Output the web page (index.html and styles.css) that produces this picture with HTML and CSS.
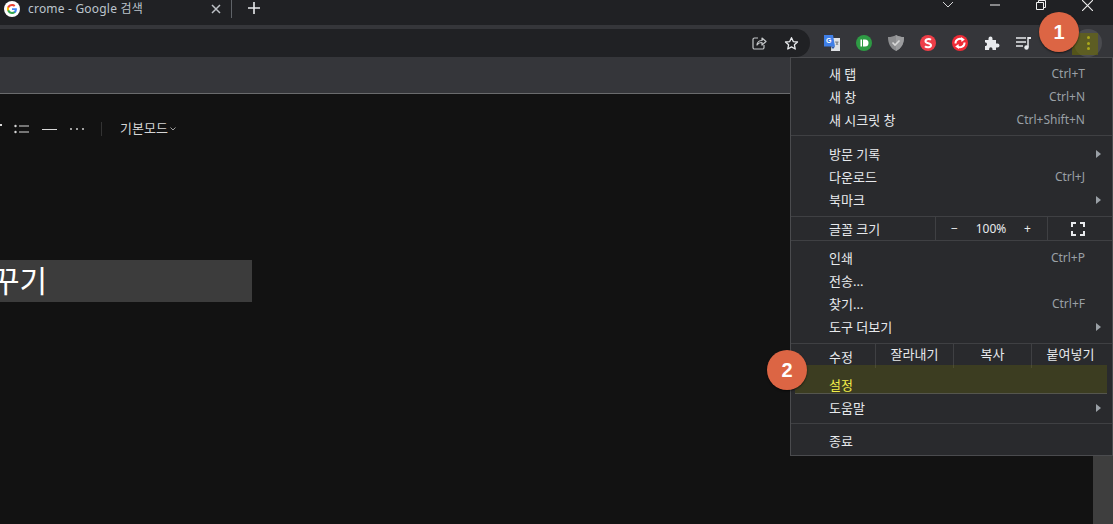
FILE: index.html
```html
<!DOCTYPE html>
<html lang="ko">
<head>
<meta charset="utf-8">
<title>crome - Google 검색</title>
<link rel="stylesheet" href="styles.css">
</head>
<body>
<div class="window">
  <header class="tabstrip">
    <div class="tab">
      <svg class="favicon" viewBox="0 0 16 16" width="16" height="16"><circle cx="8" cy="8" r="8" fill="#fff"/><path d="M12.900 8.200c0-.4 0-.7-.1-1H8v1.900h2.800c-.1.600-.5 1.200-1 1.500v1.300h1.600c1-.9 1.500-2.200 1.500-3.700z" fill="#4285f4"/><path d="M8 13c1.400 0 2.500-.5 3.400-1.300l-1.600-1.300c-.5.300-1 .5-1.800.5-1.300 0-2.500-.9-2.900-2.100H3.400v1.300C4.200 11.900 6 13 8 13z" fill="#34a853"/><path d="M5.100 8.800c-.2-.6-.2-1.100 0-1.700V5.800H3.400c-.6 1.300-.6 3 0 4.300z" fill="#fbbc05"/><path d="M8 5c.8 0 1.500.3 2 .8l1.400-1.400C10.500 3.500 9.400 3 8 3 6 3 4.200 4.100 3.400 5.800l1.700 1.300C5.500 5.900 6.700 5 8 5z" fill="#ea4335"/></svg>
      <span class="tab-title">crome - Google 검색</span>
      <svg class="tab-close" viewBox="0 0 10 10" width="10" height="10"><path d="M1 1l8 8M9 1l-8 8" stroke="#bdc1c6" stroke-width="1.500" fill="none"/></svg>
    </div>
    <svg class="new-tab" viewBox="0 0 12 12" width="12" height="12"><path d="M6 0v12M0 6h12" stroke="#e8eaed" stroke-width="1.600" fill="none"/></svg>
    <div class="window-controls">
      <svg viewBox="0 0 12 8" width="12" height="8"><path d="M1 1l5 5 5-5" stroke="#d5d6d8" stroke-width="1" fill="none"/></svg>
      <svg viewBox="0 0 10 2" width="10" height="2"><path d="M0 1h10" stroke="#f0f0f0" stroke-width="1" fill="none"/></svg>
      <svg viewBox="0 0 10 10" width="10" height="10"><path d="M.5 2.500h7v7h-7zM2.500 2.500v-2h7v7h-2" stroke="#f0f0f0" stroke-width="1" fill="none"/></svg>
      <svg viewBox="0 0 10 10" width="11" height="11"><path d="M0 0l10 10M10 0L0 10" stroke="#f0f0f0" stroke-width="1" fill="none"/></svg>
    </div>
  </header>
  <div class="toolbar">
    <div class="omnibox">
      <svg viewBox="0 0 16 16" width="16" height="16"><path d="M7 3H3.500A1.500 1.500 0 0 0 2 4.500v8A1.500 1.500 0 0 0 3.500 14h8a1.500 1.500 0 0 0 1.500-1.500V10" stroke="#c4c7c9" stroke-width="1.200" fill="none"/><path d="M6 10c0-3 2.500-4.500 5-4.500V3l4 3.500L11 10V7.500c-2 0-4 .7-5 2.500z" stroke="#c4c7c9" stroke-width="1.200" fill="none" stroke-linejoin="round"/></svg>
      <svg viewBox="0 0 16 16" width="15" height="15"><path d="M8 1.800l1.900 4.100 4.500.5-3.300 3 .9 4.500L8 11.600l-4 2.300.9-4.500-3.300-3 4.500-.5z" stroke="#e8eaed" stroke-width="1.400" fill="none" stroke-linejoin="round"/></svg>
    </div>
    <div class="extensions">
      <svg class="ext" viewBox="0 0 16 16" width="16" height="16"><path d="M8 3h8v13H7z" fill="#dfe1e5"/><path d="M0 0h9l2 11.500H0z" fill="#3f7fe8"/><path d="M7 11.500h4L9 14z" fill="#2a56a8"/><text class="ext-g" x="2" y="8">G</text><path d="M11 7h3.500M12 10l2-3M12 7l2 3" stroke="#7b7f86" stroke-width=".9" fill="none"/></svg>
      <svg class="ext" viewBox="0 0 16 16" width="16" height="16"><circle cx="8" cy="8" r="8" fill="#2e9a44"/><path d="M4.500 4.500h1.500v7H4.500z" fill="#fff"/><path d="M7 4.500h2a3.500 3.500 0 0 1 0 7H7z" fill="#fff"/></svg>
      <svg class="ext" viewBox="0 0 16 16" width="16" height="16"><path d="M8 0c2.500 1.500 5 2 8 2 0 6-2 11-8 14C2 13 0 8 0 2c3 0 5.500-.5 8-2z" fill="#8c8d8f"/><path d="M8 0c2.500 1.500 5 2 8 2 0 6-2 11-8 14z" fill="#9b9c9e"/><path d="M4.500 7.500l2.500 2.500 4.500-4.500" stroke="#d8d8d8" stroke-width="1.600" fill="none"/></svg>
      <svg class="ext" viewBox="0 0 16 16" width="16" height="16"><circle cx="8" cy="8" r="8" fill="#ee3e48"/><path d="M11 4.800C9.500 3.700 5.500 3.800 5.500 6.200S11 7.800 11 10.200 6.500 12.700 5 11.200" stroke="#fff" stroke-width="2" fill="none"/></svg>
      <svg class="ext" viewBox="0 0 16 16" width="16" height="16"><circle cx="8" cy="8" r="8" fill="#ef2b36"/><path d="M3.500 8.500A4.500 4.500 0 0 1 10.500 4.500M12.500 7.500A4.500 4.500 0 0 1 5.500 11.500" stroke="#fff" stroke-width="2" fill="none"/><path d="M9 2l3.800 2.500L9.500 7zM7 14l-3.800-2.500L6.500 9z" fill="#fff"/></svg>
      <svg class="ext" viewBox="0 0 16 16" width="16" height="16"><path d="M1 5h3.500V3.500a2 2 0 0 1 4 0V5H12v3.500h1.500a2 2 0 0 1 0 4H12V15H8.500v-1a1.700 1.700 0 0 0-3.400 0v1H1v-4h1a2 2 0 0 0 0-3.500H1z" fill="#e8eaed"/></svg>
      <svg class="ext" viewBox="0 0 16 16" width="16" height="16"><path d="M0 3h10M0 7h10M0 11h7" stroke="#e8eaed" stroke-width="1.300" fill="none"/><path d="M12 2v10" stroke="#e8eaed" stroke-width="1.500"/><path d="M12 2h3v2h-3" fill="#e8eaed"/><circle cx="10.500" cy="12.500" r="2.200" fill="#e8eaed"/></svg>
      <span class="avatar"></span>
      <button class="menu-button" aria-label="menu"><i></i><i></i><i></i></button>
    </div>
  </div>
  <div class="bookmarks"></div>
  <div class="page">
    <main class="doc">
      <div class="doc-toolbar">
        <span class="tick"></span>
        <svg class="doc-list" viewBox="0 0 15 10" width="15" height="10"><path d="M5 2h10M5 8h10" stroke="#d8d8d8" stroke-width="1"/><circle cx="1.500" cy="2" r="1.200" fill="#d8d8d8"/><circle cx="1.500" cy="8" r="1.200" fill="#d8d8d8"/></svg>
        <span class="doc-line"></span>
        <span class="doc-dots"><i></i><i></i><i></i></span>
        <span class="doc-divider"></span>
        <span class="doc-mode">기본모드</span>
        <svg class="doc-caret" viewBox="0 0 6 4" width="6" height="4"><path d="M.5.500L3 3 5.500.500" stroke="#b0b0b0" stroke-width=".9" fill="none"/></svg>
      </div>
      <div class="doc-heading"><span>꾸기</span></div>
    </main>
    <div class="scrollbar"></div>
  </div>
</div>

<nav class="menu">
  <section class="sec sec-a">
    <div class="row"><span>새 탭</span><kbd>Ctrl+T</kbd></div>
    <div class="row"><span>새 창</span><kbd>Ctrl+N</kbd></div>
    <div class="row"><span>새 시크릿 창</span><kbd>Ctrl+Shift+N</kbd></div>
  </section>
  <section class="sec sec-b">
    <div class="row"><span>방문 기록</span><b class="arrow"></b></div>
    <div class="row"><span>다운로드</span><kbd>Ctrl+J</kbd></div>
    <div class="row"><span>북마크</span><b class="arrow"></b></div>
  </section>
  <section class="sec-zoom">
    <span class="zoom-label">글꼴 크기</span>
    <div class="zoom-ctrl"><span>−</span><span>100%</span><span>+</span></div>
    <div class="zoom-full"><svg viewBox="0 0 14 14" width="14" height="14"><path d="M1 5V1h4M9 1h4v4M13 9v4H9M5 13H1V9" stroke="#e8eaed" stroke-width="2" fill="none"/></svg></div>
  </section>
  <section class="sec sec-c">
    <div class="row"><span>인쇄</span><kbd>Ctrl+P</kbd></div>
    <div class="row"><span>전송...</span></div>
    <div class="row"><span>찾기...</span><kbd>Ctrl+F</kbd></div>
    <div class="row"><span>도구 더보기</span><b class="arrow"></b></div>
  </section>
  <section class="sec-edit">
    <span class="edit-label">수정</span>
    <span class="edit-cell">잘라내기</span>
    <span class="edit-cell">복사</span>
    <span class="edit-cell">붙여넣기</span>
  </section>
  <section class="sec sec-d">
    <div class="row row-hot"><span>설정</span></div>
    <div class="row"><span>도움말</span><b class="arrow"></b></div>
  </section>
  <section class="sec sec-e">
    <div class="row"><span>종료</span></div>
  </section>
  <div class="highlight"></div>
</nav>

<div class="menu-button-mark"></div>
<div class="badge badge-1">1</div>
<div class="badge badge-2">2</div>
</body>
</html>
```
FILE: styles.css
```css
* { box-sizing: border-box; }
html, body { margin: 0; height: 100%; overflow: hidden; background: #121212; }
body { font: 12px/1.2 "Noto Sans", "Noto Sans CJK KR", sans-serif; color: #e8eaed; }

.window { display: flex; flex-direction: column; height: 524px; }

.tabstrip { height: 25px; background: #202124; display: flex; align-items: flex-start; }
.tab { width: 232px; height: 18px; padding-left: 4px; display: flex; align-items: center; border-right: 1px solid #5f6368; }
.favicon { flex: none; }
.tab-title { margin-left: 8px; flex: 1; font-size: 12px; letter-spacing: .2px; color: #bcc4cc; white-space: nowrap; }
.tab-close { margin-right: 10px; }
.new-tab { margin: 2px 0 0 16px; }
.window-controls { margin-left: auto; padding-right: 20px; display: flex; gap: 36px; align-items: center; height: 10px; }

.toolbar { height: 32px; padding-top: 4px; background: #35363a; display: flex; }
.omnibox { width: 810px; background: #202124; border-radius: 0 14px 14px 0; display: flex; align-items: center; justify-content: flex-end; gap: 17px; padding-right: 11px; }
.extensions { flex: 1; display: flex; align-items: center; padding-left: 14px; gap: 16px; }
.ext { flex: none; }
.ext-g { font: 700 7px "Liberation Sans", sans-serif; fill: #fff; }
.avatar { width: 16px; height: 16px; border-radius: 50%; background: #55504c; flex: none; }
.menu-button { width: 28px; height: 28px; margin-left: -6px; padding: 0; border: 0; border-radius: 50%; background: #4a4b4f; display: flex; flex-direction: column; align-items: center; justify-content: center; gap: 2.500px; }
.menu-button i { width: 3px; height: 3px; border-radius: 50%; background: #f5ee3c; }

.bookmarks { height: 37px; background: #35363a; border-bottom: 1px solid #6a6b6d; }

.page { flex: 1; display: flex; min-height: 0; }
.doc { flex: 1; background: #121212; min-width: 0; }
.scrollbar { width: 20px; background: #3e3e3e; }

.doc-toolbar { height: 14px; margin-top: 28px; display: flex; align-items: center; }
.tick { width: 2px; height: 2px; margin-top: -8px; background: #d8d8d8; }
.doc-list { margin-left: 12px; }
.doc-line { width: 15px; height: 1px; margin-left: 13px; background: #d8d8d8; }
.doc-dots { display: flex; gap: 4px; margin-left: 13px; }
.doc-dots i { width: 2px; height: 2px; border-radius: 50%; background: #d0d0d0; }
.doc-divider { width: 1px; height: 14px; margin-left: 17px; background: #333; }
.doc-mode { margin-left: 18px; font-size: 13px; color: #d5d5d5; }
.doc-caret { margin-left: 2px; }
.doc-heading { width: 252px; height: 42px; margin-top: 124px; background: #3c3c3c; display: flex; align-items: center; overflow: hidden; }
.doc-heading span { margin-left: -8px; font-size: 30px; line-height: 1; color: #fff; }

.menu { position: absolute; left: 790px; top: 57px; width: 323px; height: 399px; background: #292a2d; border: 1px solid #4a4b4e; color: #e8eaed; font-size: 13px; }
.sec { padding: 0 0 0 38px; border-bottom: 1px solid #3f4043; }
.sec-a { padding-top: 5px; padding-bottom: 2px; height: 78px; }
.sec-b { padding-top: 7px; padding-bottom: 3px; height: 81px; }
.sec-c { padding-top: 6px; padding-bottom: 3px; height: 103px; }
.sec-d { padding-top: 6px; padding-bottom: 3px; height: 56px; }
.sec-e { padding-top: 6px; border-bottom: 0; }
.row { height: 23px; display: flex; align-items: center; justify-content: space-between; padding-right: 27px; position: relative; z-index: 1; }
.row kbd { font: inherit; font-size: 12px; color: #9aa0a6; }
.row-hot { color: #f3ee4a; }
.arrow { position: absolute; right: 11px; top: 7px; border-left: 5px solid #9aa0a6; border-top: 4.500px solid transparent; border-bottom: 4.500px solid transparent; }

.sec-zoom { height: 24px; display: flex; align-items: center; border-bottom: 1px solid #3f4043; }
.zoom-label { width: 144px; padding-left: 38px; padding-top: 3px; }
.zoom-ctrl { width: 113px; height: 100%; display: flex; align-items: center; justify-content: space-between; padding: 1px 16px 0 15px; border-left: 1px solid #3f4043; border-right: 1px solid #3f4043; font-size: 12px; }
.zoom-full { padding-left: 23px; display: flex; }

.sec-edit { height: 24px; display: flex; }
.edit-label { width: 84px; padding-left: 38px; padding-top: 6px; }
.edit-cell { width: 78px; text-align: center; padding-top: 3px; border-left: 1px solid #3f4043; }

.highlight { position: absolute; left: 4px; right: 5px; top: 307px; height: 29px; background: rgba(120, 120, 0, .25); border-bottom: 1px solid #55564e; }

.menu-button-mark { position: absolute; left: 1072px; top: 33px; width: 26px; height: 22px; background: rgba(110, 110, 0, .55); }

.badge { position: absolute; width: 40px; height: 40px; border-radius: 50%; background: #dc6544; color: #fff; font: 700 20px/40px "Liberation Sans", sans-serif; text-align: center; box-shadow: 0 1px 2px rgba(0, 0, 0, .6); }
.badge-1 { left: 1039px; top: 12px; }
.badge-2 { left: 767px; top: 350px; }
```
